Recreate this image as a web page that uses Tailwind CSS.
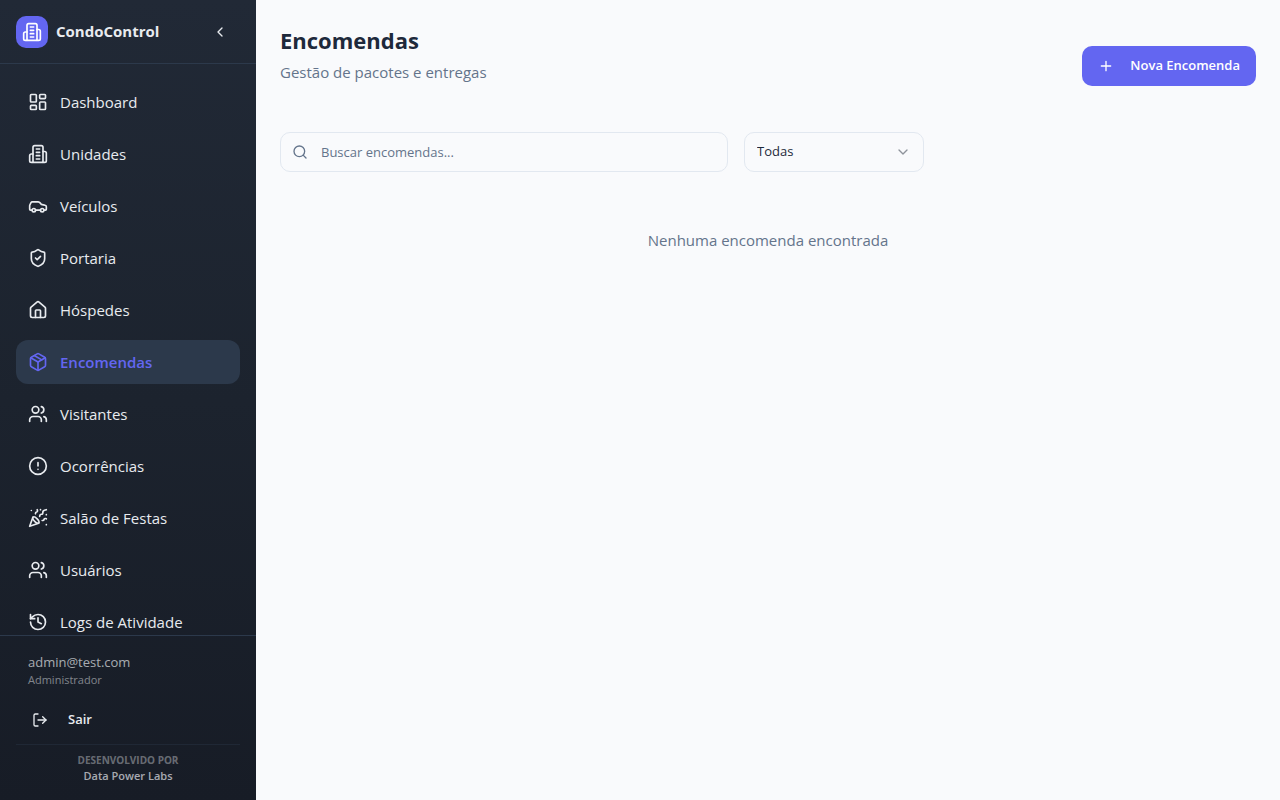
<!DOCTYPE html>
<html lang="pt-BR">
<head>
  <meta charset="utf-8"/>
  <meta content="width=device-width, initial-scale=1.0" name="viewport"/>
  <title>CondoControl - Encomendas</title>
  <script src="https://cdn.jsdelivr.net/npm/@tailwindcss/browser@4"></script>
</head>
<body class="flex h-screen bg-[#f9fafc] text-[#1e293b] font-['Segoe_UI','Open_Sans',sans-serif] text-[15px]">

  <!-- Icon sprite -->
  <svg class="hidden" xmlns="http://www.w3.org/2000/svg">
    <symbol id="i-building" viewBox="0 0 24 24">
      <path d="M6 22V4a2 2 0 0 1 2-2h8a2 2 0 0 1 2 2v18Z"/>
      <path d="M6 12H4a2 2 0 0 0-2 2v6a2 2 0 0 0 2 2h2"/>
      <path d="M18 9h2a2 2 0 0 1 2 2v9a2 2 0 0 1-2 2h-2"/>
      <path d="M10 6h4M10 10h4M10 14h4M10 18h4"/>
    </symbol>
    <symbol id="i-dashboard" viewBox="0 0 24 24">
      <rect width="7" height="9" x="3" y="3" rx="1"/>
      <rect width="7" height="5" x="14" y="3" rx="1"/>
      <rect width="7" height="9" x="14" y="12" rx="1"/>
      <rect width="7" height="5" x="3" y="16" rx="1"/>
    </symbol>
    <symbol id="i-car" viewBox="0 0 24 24">
      <path d="M19 17h2c.6 0 1-.4 1-1v-3c0-.9-.7-1.700-1.500-1.900C18.700 10.600 16 10 16 10s-1.300-1.400-2.200-2.300c-.5-.4-1.100-.7-1.800-.7H5c-.6 0-1.100.4-1.400.9l-1.400 2.900A3.700 3.700 0 0 0 2 12v4c0 .6.4 1 1 1h2"/>
      <circle cx="7" cy="17" r="2"/>
      <path d="M9 17h6"/>
      <circle cx="17" cy="17" r="2"/>
    </symbol>
    <symbol id="i-shield" viewBox="0 0 24 24">
      <path d="M20 13c0 5-3.500 7.500-7.660 8.950a1 1 0 0 1-.67-.01C7.500 20.500 4 18 4 13V6a1 1 0 0 1 1-1c2 0 4.500-1.200 6.240-2.720a1.170 1.170 0 0 1 1.520 0C14.510 3.810 17 5 19 5a1 1 0 0 1 1 1z"/>
      <path d="m9 12 2 2 4-4"/>
    </symbol>
    <symbol id="i-house" viewBox="0 0 24 24">
      <path d="M15 21v-8a1 1 0 0 0-1-1h-4a1 1 0 0 0-1 1v8"/>
      <path d="M3 10a2 2 0 0 1 .709-1.528l7-5.999a2 2 0 0 1 2.582 0l7 5.999A2 2 0 0 1 21 10v9a2 2 0 0 1-2 2H5a2 2 0 0 1-2-2z"/>
    </symbol>
    <symbol id="i-package" viewBox="0 0 24 24">
      <path d="M11 21.730a2 2 0 0 0 2 0l7-4A2 2 0 0 0 21 16V8a2 2 0 0 0-1-1.730l-7-4a2 2 0 0 0-2 0l-7 4A2 2 0 0 0 3 8v8a2 2 0 0 0 1 1.730z"/>
      <path d="M12 22V12"/>
      <path d="m3.300 7 8.700 5 8.700-5"/>
      <path d="m7.500 4.270 9 5.150"/>
    </symbol>
    <symbol id="i-users" viewBox="0 0 24 24">
      <path d="M16 21v-2a4 4 0 0 0-4-4H6a4 4 0 0 0-4 4v2"/>
      <circle cx="9" cy="7" r="4"/>
      <path d="M22 21v-2a4 4 0 0 0-3-3.870"/>
      <path d="M16 3.130a4 4 0 0 1 0 7.750"/>
    </symbol>
    <symbol id="i-alert" viewBox="0 0 24 24">
      <circle cx="12" cy="12" r="10"/>
      <path d="M12 8v4M12 16h.01"/>
    </symbol>
    <symbol id="i-party" viewBox="0 0 24 24">
      <path d="M5.800 11.300 2 22l10.700-3.790"/>
      <path d="M4 3h.01M22 8h.01M15 2h.01M22 20h.01"/>
      <path d="m22 2-2.240.75a2.900 2.900 0 0 0-1.960 3.120c.1.860-.57 1.630-1.450 1.630h-.38c-.86 0-1.600.6-1.760 1.440L14 10"/>
      <path d="m22 13-.82-.33c-.86-.34-1.820.2-1.980 1.110c-.11.7-.72 1.220-1.430 1.220H17"/>
      <path d="m11 2 .33.820c.34.860-.2 1.820-1.110 1.980C9.520 4.900 9 5.520 9 6.230V7"/>
      <path d="M11 13c1.930 1.930 2.830 4.170 2 5-.83.830-3.070-.07-5-2-1.930-1.930-2.830-4.170-2-5 .83-.83 3.070.07 5 2Z"/>
    </symbol>
    <symbol id="i-history" viewBox="0 0 24 24">
      <path d="M3 12a9 9 0 1 0 9-9 9.750 9.750 0 0 0-6.740 2.740L3 8"/>
      <path d="M3 3v5h5"/>
      <path d="M12 7v5l4 2"/>
    </symbol>
    <symbol id="i-logout" viewBox="0 0 24 24">
      <path d="M9 21H5a2 2 0 0 1-2-2V5a2 2 0 0 1 2-2h4"/>
      <path d="m16 17 5-5-5-5"/>
      <path d="M21 12H9"/>
    </symbol>
    <symbol id="i-left" viewBox="0 0 24 24"><path d="m15 18-6-6 6-6"/></symbol>
    <symbol id="i-down" viewBox="0 0 24 24"><path d="m6 9 6 6 6-6"/></symbol>
    <symbol id="i-plus" viewBox="0 0 24 24"><path d="M5 12h14M12 5v14"/></symbol>
    <symbol id="i-search" viewBox="0 0 24 24"><circle cx="11" cy="11" r="8"/><path d="m21 21-4.300-4.300"/></symbol>
  </svg>

  <!-- Sidebar -->
  <aside class="flex w-64 shrink-0 flex-col bg-linear-to-b from-[#212936] via-[#1c232e] to-[#171c26] text-[#e8ebef]">
    <div class="flex h-16 shrink-0 items-center justify-between border-b border-[#2c394b] px-4">
      <div class="flex items-center gap-2">
        <div class="flex size-8 items-center justify-center rounded-[10px] bg-[#6366f1] text-white">
          <svg class="size-5 fill-none stroke-current stroke-2 [stroke-linecap:round] [stroke-linejoin:round]"><use href="#i-building"/></svg>
        </div>
        <span class="font-bold">CondoControl</span>
      </div>
      <button aria-label="Recolher menu" class="flex size-10 items-center justify-center rounded-lg hover:bg-[#2c394b]" type="button">
        <svg class="size-4 fill-none stroke-current stroke-2 [stroke-linecap:round] [stroke-linejoin:round]"><use href="#i-left"/></svg>
      </button>
    </div>

    <nav class="flex min-h-0 flex-1 flex-col gap-2 overflow-y-auto p-4 [scrollbar-width:none] [&_a]:flex [&_a]:h-11 [&_a]:shrink-0 [&_a]:items-center [&_a]:gap-3 [&_a]:rounded-xl [&_a]:px-3 [&_svg]:size-5 [&_svg]:fill-none [&_svg]:stroke-current [&_svg]:stroke-2 [&_svg]:[stroke-linecap:round] [&_svg]:[stroke-linejoin:round]">
      <a href="#"><svg><use href="#i-dashboard"/></svg>Dashboard</a>
      <a href="#"><svg><use href="#i-building"/></svg>Unidades</a>
      <a href="#"><svg><use href="#i-car"/></svg>Veículos</a>
      <a href="#"><svg><use href="#i-shield"/></svg>Portaria</a>
      <a href="#"><svg><use href="#i-house"/></svg>Hóspedes</a>
      <a aria-current="page" class="bg-[#2c394b] font-semibold text-[#6366f1]" href="#"><svg><use href="#i-package"/></svg>Encomendas</a>
      <a href="#"><svg><use href="#i-users"/></svg>Visitantes</a>
      <a href="#"><svg><use href="#i-alert"/></svg>Ocorrências</a>
      <a href="#"><svg><use href="#i-party"/></svg>Salão de Festas</a>
      <a href="#"><svg><use href="#i-users"/></svg>Usuários</a>
      <a href="#"><svg><use href="#i-history"/></svg>Logs de Atividade</a>
    </nav>

    <div class="shrink-0 border-t border-[#2c394b] p-4">
      <div class="px-3">
        <p class="text-[13px] leading-5 text-[#e8ebef]/70">admin@test.com</p>
        <p class="text-[11px] leading-4 text-[#e8ebef]/50">Administrador</p>
      </div>
      <button class="mt-3 flex h-10 w-full items-center gap-5 rounded-lg px-4 text-[13px] font-semibold hover:bg-[#2c394b]" type="button">
        <svg class="size-4 fill-none stroke-current stroke-2 [stroke-linecap:round] [stroke-linejoin:round]"><use href="#i-logout"/></svg>
        Sair
      </button>
      <div class="mt-1 border-t border-[#2c394b]/40 pt-[7px] text-center leading-4">
        <p class="text-[10px] font-bold text-[#e8ebef]/40">DESENVOLVIDO POR</p>
        <p class="text-[11px] font-semibold text-[#e8ebef]/70">Data Power Labs</p>
      </div>
    </div>
  </aside>

  <!-- Content -->
  <main class="min-w-0 flex-1 overflow-y-auto p-6">
    <div class="flex items-center justify-between">
      <div class="pb-6">
        <h1 class="mb-1 text-[22px] leading-8 font-bold">Encomendas</h1>
        <p class="leading-6 text-[#64748b]">Gestão de pacotes e entregas</p>
      </div>
      <button class="flex h-10 items-center gap-4 rounded-[10px] bg-[#6366f1] px-4 text-[13px] font-semibold text-white hover:bg-[#4f46e5]" type="button">
        <svg class="size-4 fill-none stroke-current stroke-2 [stroke-linecap:round] [stroke-linejoin:round]"><use href="#i-plus"/></svg>
        Nova Encomenda
      </button>
    </div>

    <div class="mt-6 flex gap-4 text-[13px]">
      <div class="relative w-full max-w-md">
        <label class="sr-only" for="search">Buscar encomendas</label>
        <svg class="absolute top-3 left-3 size-4 fill-none stroke-[#64748b] stroke-2 [stroke-linecap:round] [stroke-linejoin:round]"><use href="#i-search"/></svg>
        <input class="h-10 w-full rounded-[10px] border border-[#e2e8f0] pr-3 pl-10 placeholder:text-[#64748b] focus:outline-none focus:ring-2 focus:ring-[#6366f1]" id="search" placeholder="Buscar encomendas..." type="text"/>
      </div>
      <div class="relative w-[180px] shrink-0">
        <label class="sr-only" for="status">Status</label>
        <select class="h-10 w-full appearance-none rounded-[10px] border border-[#e2e8f0] px-3 focus:outline-none focus:ring-2 focus:ring-[#6366f1]" id="status">
          <option>Todas</option>
          <option>Pendentes</option>
          <option>Entregues</option>
        </select>
        <svg class="pointer-events-none absolute top-3 right-[13px] size-4 fill-none stroke-[#8e939b] stroke-2 [stroke-linecap:round] [stroke-linejoin:round]"><use href="#i-down"/></svg>
      </div>
    </div>

    <p class="py-14 text-center leading-6 text-[#64748b]">Nenhuma encomenda encontrada</p>
  </main>
</body>
</html>
